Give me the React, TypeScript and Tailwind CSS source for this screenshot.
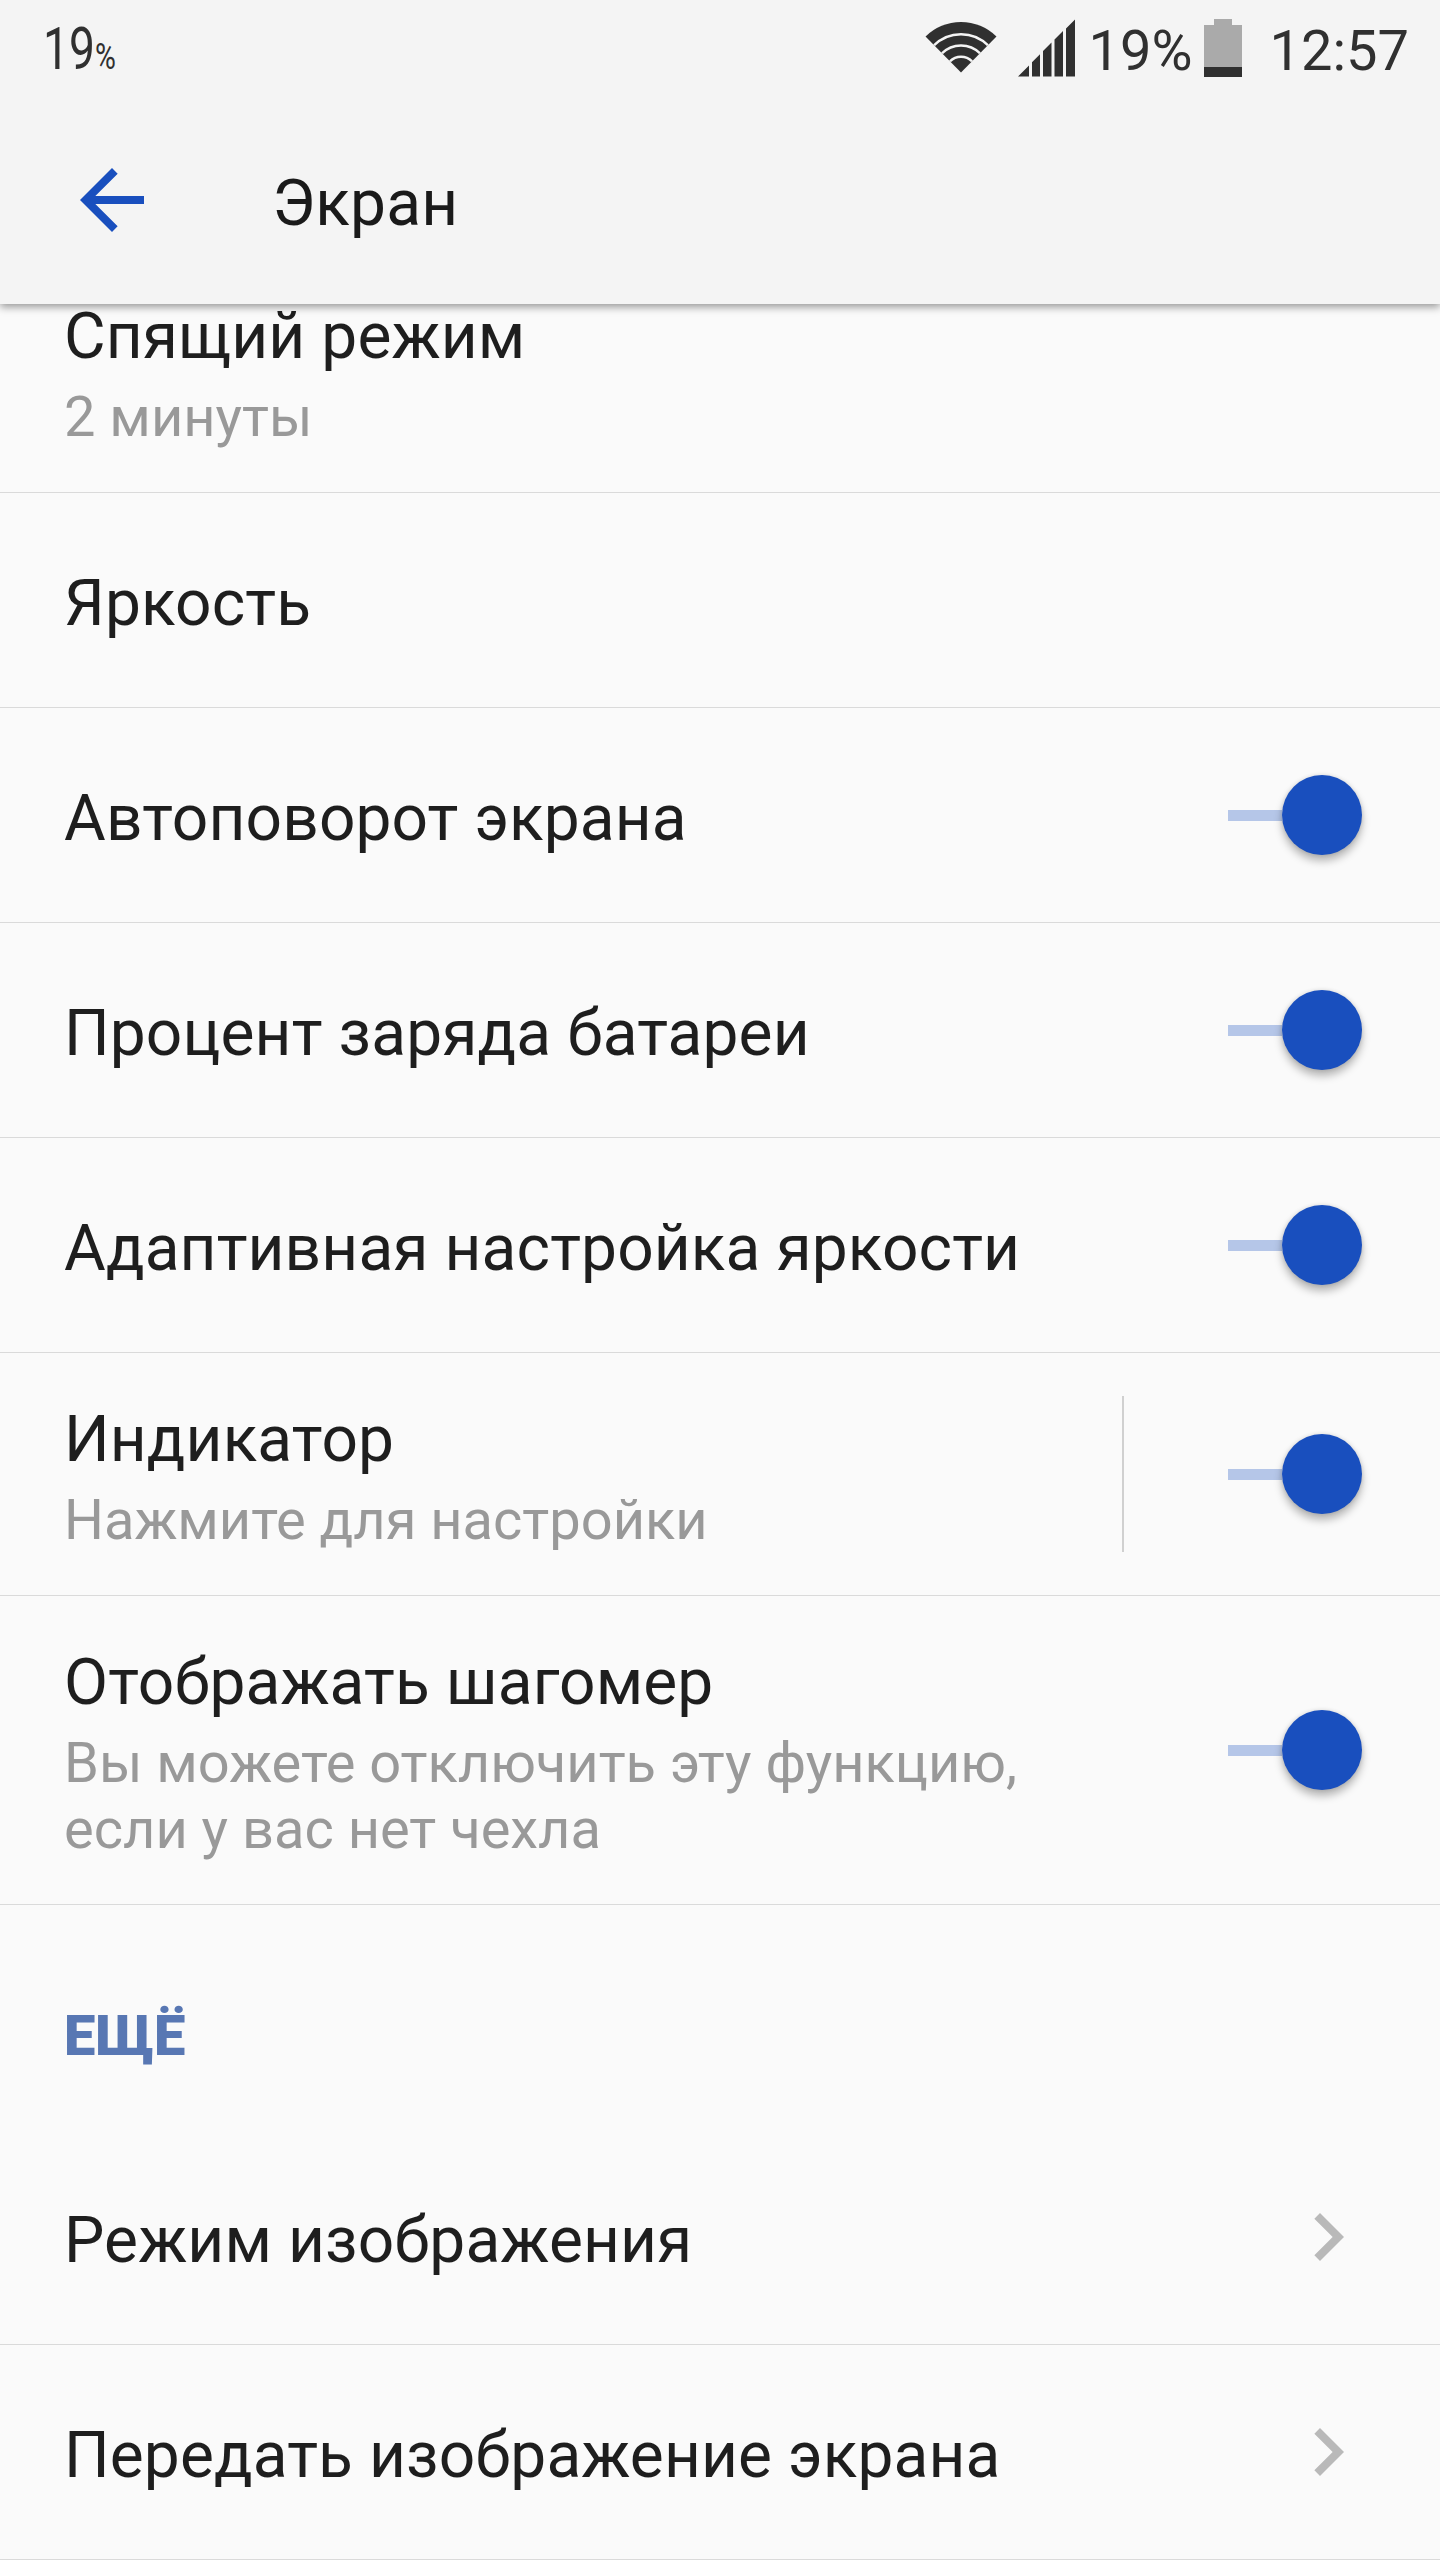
import type { ReactNode } from "react";

function WifiIcon() {
  return (
    <svg className="mb-[2px] h-[52px] w-[72px]" viewBox="0 0 72 52" fill="#303030">
      <defs>
        <clipPath id="fan">
          <path d="M36 51.5 L0 15 L0 0 L72 0 L72 15 Z" />
        </clipPath>
      </defs>
      <g clipPath="url(#fan)">
        <circle cx="36" cy="51.5" r="50.5" />
        <g fill="none" stroke="#f4f4f4" strokeWidth="2.4">
          <circle cx="36" cy="51.5" r="38.3" />
          <circle cx="36" cy="51.5" r="27" />
          <circle cx="36" cy="51.5" r="15.7" />
        </g>
      </g>
    </svg>
  );
}

function SignalIcon() {
  return (
    <svg className="h-[58px] w-[58px]" viewBox="0 0 58 58" fill="#303030">
      <path d="M0 57.5 L11 46.5 V57.5Z M14 43.3 L22 35.3 V57.5H14Z M25 32 L33.5 23.5 V57.5H25Z M36.5 20.5 L45 12 V57.5H36.5Z M48 9.5 L57 .5 V57.5H48Z" />
    </svg>
  );
}

function BatteryIcon() {
  return (
    <svg className="h-[58px] w-[38px]" viewBox="0 0 38 58">
      <path d="M10 0H28V6H38V48H0V6H10Z" fill="#aaaaaa" />
      <path d="M0 48H38V58H0Z" fill="#303030" />
    </svg>
  );
}

function Toggle() {
  return (
    <div className="flex w-[135px] items-center">
      <div className="h-[11px] w-[54px] bg-[#b5c6e8]" />
      <div className="size-20 rounded-full bg-[#194fbe] shadow-[0_6px_8px_rgba(0,0,0,0.28),0_0_4px_rgba(0,0,0,0.12)]" />
    </div>
  );
}

function Chevron() {
  return (
    <svg className="size-24" viewBox="0 0 24 24" fill="#b9b9b9">
      <path d="M10 6L8.59 7.41 13.17 12l-4.58 4.59L10 18l6-6z" />
    </svg>
  );
}

function Row({ title, summary, control }: { title: string; summary?: ReactNode; control?: ReactNode }) {
  return (
    <div className="flex items-center justify-between border-b border-[#dadada] pl-16">
      <div className={summary ? "pt-[49px] pb-[42px]" : "pt-[73px] pb-[66px]"}>
        <div className="text-[64px] leading-[75px] tracking-[0.13px] whitespace-nowrap text-[#1e1e1e]">{title}</div>
        {summary && <div className="mt-[10px] text-[56px] leading-[66px] whitespace-nowrap text-[#999999]">{summary}</div>}
      </div>
      {control}
    </div>
  );
}

const toggle = (
  <div className="pr-[77px]">
    <Toggle />
  </div>
);

const dividedToggle = (
  <div className="flex items-center pr-[77px]">
    <div className="mr-[104px] h-[156px] w-[2px] bg-[#d0d0d0]" />
    <Toggle />
  </div>
);

const chevron = (
  <div className="pr-16">
    <Chevron />
  </div>
);

export default function App() {
  return (
    <div className="flex h-[2560px] w-[1440px] flex-col overflow-hidden bg-[#fafafa] font-[Roboto,sans-serif]">
      <header className="relative z-10 h-[304px] shrink-0 bg-[#f4f4f4] shadow-[0_3px_8px_rgba(0,0,0,0.4)]">
        <div className="flex h-24 items-center justify-between pr-[31px] pl-[43px] text-[#303030]">
          <div className="flex origin-left scale-x-[0.77] items-baseline pt-[2px]">
            <span className="text-[60px] leading-[96px]">19</span>
            <span className="text-[37px]">%</span>
          </div>
          <div className="flex items-center text-[56px] leading-[96px]">
            <WifiIcon />
            <div className="ml-[21px]">
              <SignalIcon />
            </div>
            <span className="ml-[13px] pt-[6px]">19%</span>
            <div className="ml-[11px]">
              <BatteryIcon />
            </div>
            <span className="ml-[28px] pt-[6px]">12:57</span>
          </div>
        </div>
        <div className="flex h-[208px] items-center pl-16">
          <svg className="size-24" viewBox="0 0 24 24" fill="#194fbe">
            <path d="M20 11H7.83l5.59-5.59L12 4l-8 8 8 8 1.41-1.41L7.83 13H20v-2z" />
          </svg>
          <h1 className="ml-[112px] pt-[6px] text-[64px] leading-[75px] tracking-[0.17px] text-[#1a1a1a]">Экран</h1>
        </div>
      </header>
      <main className="-mt-[54px]">
        <Row title="Спящий режим" summary="2 минуты" />
        <Row title="Яркость" />
        <Row title="Автоповорот экрана" control={toggle} />
        <Row title="Процент заряда батареи" control={toggle} />
        <Row title="Адаптивная настройка яркости" control={toggle} />
        <Row title="Индикатор" summary="Нажмите для настройки" control={dividedToggle} />
        <Row
          title="Отображать шагомер"
          summary={
            <>
              Вы можете отключить эту функцию,
              <br />
              если у вас нет чехла
            </>
          }
          control={toggle}
        />
        <h2 className="h-[225px] pt-[98px] pl-16 text-[56px] leading-[66px] font-black text-[#5877b3]">ЕЩЁ</h2>
        <Row title="Режим изображения" control={chevron} />
        <Row title="Передать изображение экрана" control={chevron} />
      </main>
    </div>
  );
}
